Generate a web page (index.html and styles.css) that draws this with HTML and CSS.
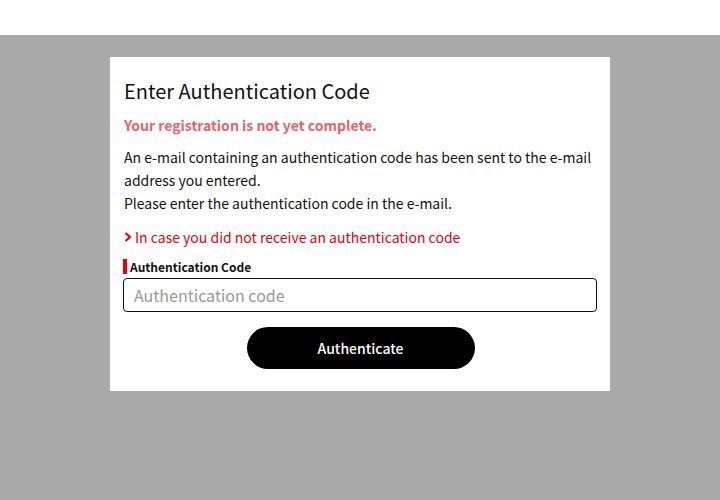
FILE: index.html
```html
<!DOCTYPE html>
<html>
<head>
<meta charset="utf-8">
<link rel="stylesheet" href="styles.css">
</head>
<body>
<div class="topbar"></div>
<div class="overlay">
  <div class="card">
    <h1 class="title">Enter Authentication Code</h1>
    <p class="warn">Your registration is not yet complete.</p>
    <p class="desc">An e-mail containing an authentication code has been sent to the e-mail address you entered.<br>Please enter the authentication code in the e-mail.</p>
    <a class="link" href="#"><svg class="chev" width="8" height="10" viewBox="0 0 8 10"><path d="M1.5 1 L6 5 L1.5 9" fill="none" stroke="#e60012" stroke-width="2.2"/></svg>In case you did not receive an authentication code</a>
    <div class="label">Authentication Code</div>
    <input class="code" type="text" placeholder="Authentication code">
    <div class="actions"><button class="btn">Authenticate</button></div>
  </div>
</div>
</body>
</html>
```
FILE: styles.css
```css
html, body { margin: 0; padding: 0; }
body {
  font-family: "Noto Sans CJK JP", "Noto Sans", sans-serif;
  background: #fff;
  width: 720px;
  height: 500px;
  overflow: hidden;
}
.topbar { height: 35px; background: #fff; }
.overlay {
  background: #aaaaaa;
  height: 465px;
  padding: 22px 0 0 110px;
  box-sizing: border-box;
}
.card {
  width: 500px;
  background: #fff;
  box-sizing: border-box;
  padding: 20px 13px 22px 14px;
  display: flex;
  flex-direction: column;
}
.title {
  margin: 0;
  font-size: 20px;
  font-weight: 400;
  line-height: 28px;
  color: #111;
}
.warn {
  margin: 10px 0 0;
  font-size: 14px;
  font-weight: 700;
  color: #e8636b;
  line-height: 20px;
}
.desc {
  margin: 11px 0 0;
  font-size: 14px;
  line-height: 23px;
  color: #111;
}
.link {
  margin-top: 12px;
  font-size: 14px;
  line-height: 20px;
  color: #e60012;
  text-decoration: none;
  display: flex;
  align-items: center;
  gap: 3px;
}
.chev { flex: none; }
.label {
  margin-top: 12px;
  font-size: 12px;
  font-weight: 700;
  color: #111;
  line-height: 15px;
  border-left: 4px solid #e60012;
  padding-left: 3px;
  margin-left: -1px;
}
.code {
  margin: 4px 0 0 -1px;
  height: 34px;
  box-sizing: border-box;
  border: 1px solid #111;
  border-radius: 4px;
  padding: 0 10px;
  font-family: inherit;
  font-size: 16px;
  color: #111;
  outline: none;
}
.code::placeholder { color: #999; }
.actions { display: flex; justify-content: center; margin-top: 15px; }
.btn {
  width: 228px;
  height: 42px;
  background: #000;
  color: #fff;
  border: none;
  border-radius: 21px;
  font-family: inherit;
  font-size: 14px;
  font-weight: 500;
  cursor: pointer;
}
```
